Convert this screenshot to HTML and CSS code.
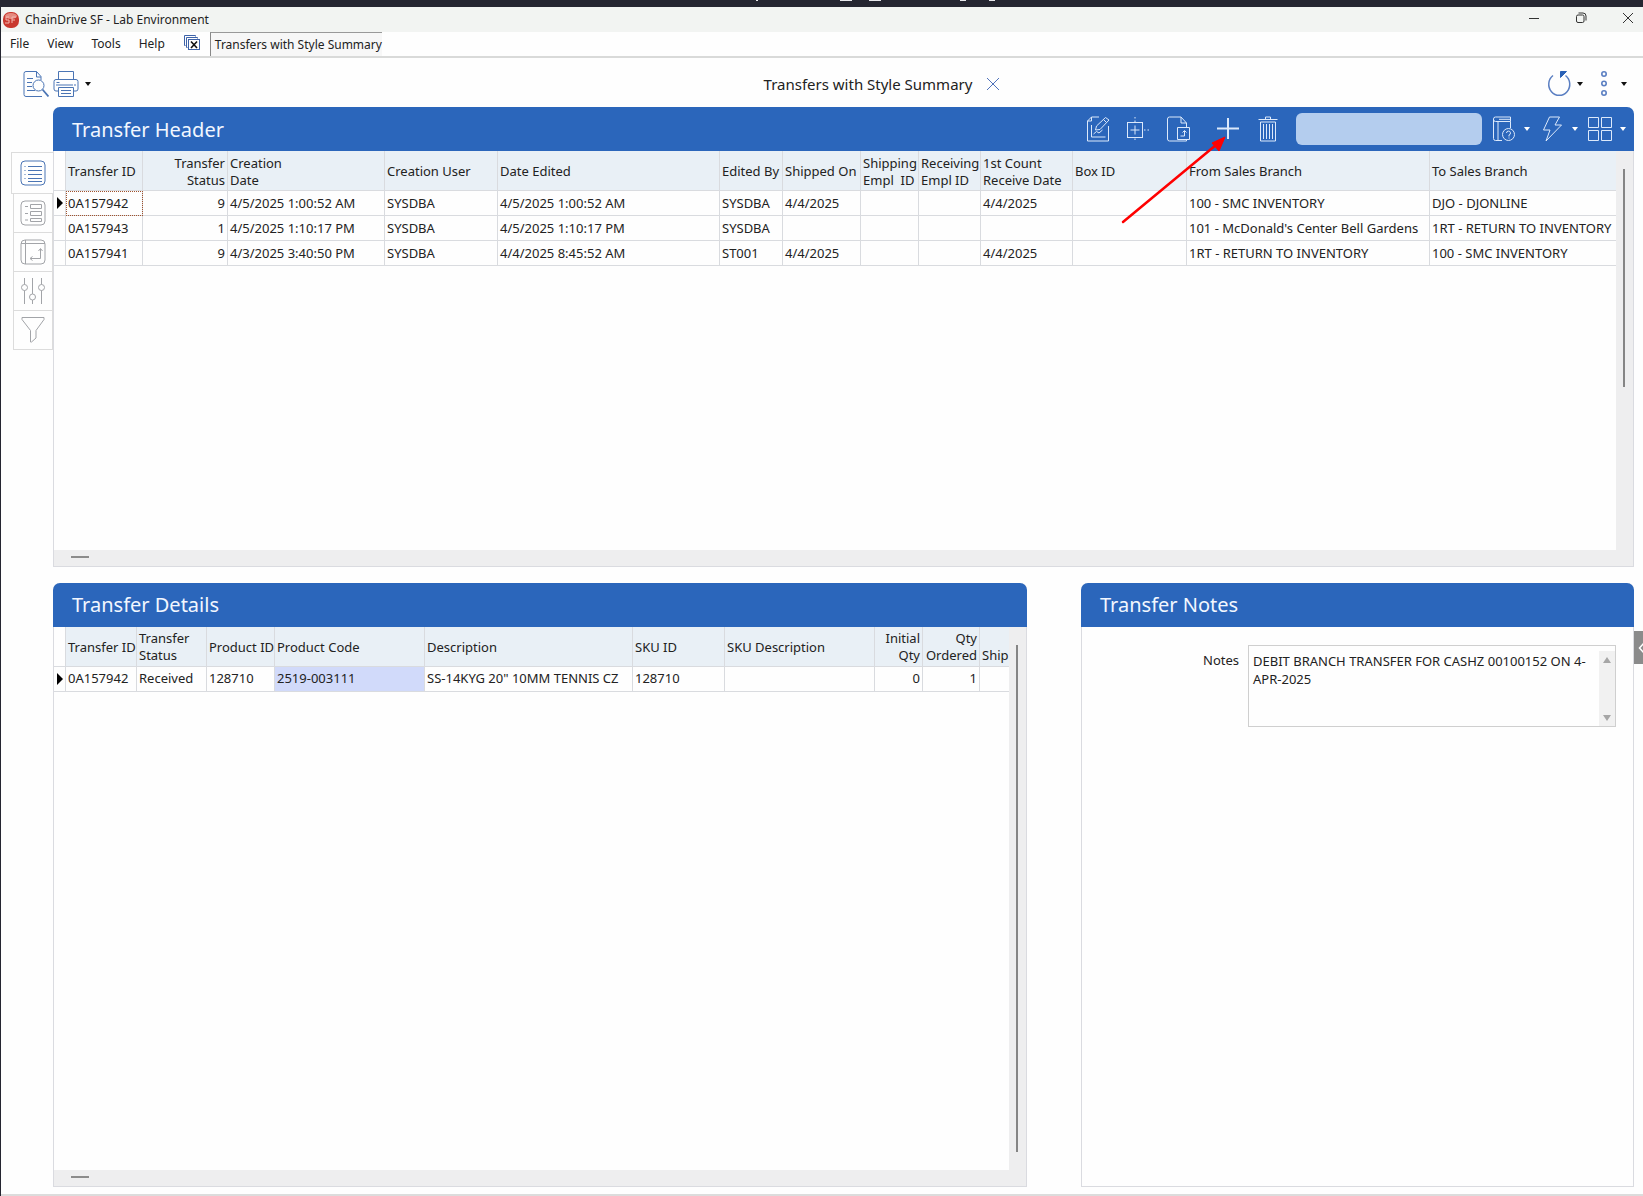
FILE: index.html
```html
<!DOCTYPE html>
<html lang="en">
<head>
    <meta charset="UTF-8">
    <meta name="viewport" content="width=device-width, initial-scale=1.0">
    <title>ChainDrive SF - Lab Environment</title>
    <link rel="stylesheet" href="styles.css">
</head>
<body>

    <!-- Strip of the window behind -->
    <div class="backdrop">
        <svg width="400" height="7" viewBox="0 0 400 7" fill="#e8e8ec">
            <rect x="134" y="0" width="2" height="1"/>
            <rect x="218" y="0" width="12" height="1"/>
            <rect x="247" y="0" width="12" height="1"/>
            <rect x="338" y="0" width="6" height="1"/>
            <rect x="367" y="0" width="6" height="1"/>
        </svg>
    </div>

    <div class="window">

        <!-- Title Bar -->
        <header class="title-bar">
            <svg class="app-logo" width="18" height="18" viewBox="0 0 18 18">
                <rect x="1" y="1" width="16" height="16" rx="7" fill="#c9382f"/>
                <ellipse cx="9" cy="5" rx="6" ry="3" fill="#e58a80"/>
                <path d="M7 6H4v3h3v3H3M14 6h-4v6M10 9h3" fill="none" stroke="#f3b7b0"/>
            </svg>
            <span class="app-name">ChainDrive SF - Lab Environment</span>
            <div class="window-buttons">
                <button aria-label="Minimize"><svg width="12" height="12" viewBox="0 0 12 12"><path d="M1 6.5h10"/></svg></button>
                <button aria-label="Restore"><svg width="12" height="12" viewBox="0 0 12 12"><rect x="1.5" y="3" width="7.5" height="7.5" rx="1.5"/><path d="M3.5 1h4.500a3 3 0 0 1 3 3v4.500"/></svg></button>
                <button aria-label="Close"><svg width="12" height="12" viewBox="0 0 12 12"><path d="M1 1l10 10M11 1L1 11"/></svg></button>
            </div>
        </header>

        <!-- Menu Bar -->
        <nav class="menu-bar">
            <button>File</button>
            <button>View</button>
            <button>Tools</button>
            <button>Help</button>
            <button class="close-all" aria-label="Close all">
                <svg width="18" height="18" viewBox="0 0 18 18" fill="none" stroke="#3d62a8">
                    <path d="M2.500 11.500h-1v-10h11v1"/>
                    <path d="M4.500 13.500h-1v-10h11v1"/>
                    <rect x="5.500" y="5.500" width="11" height="10" fill="#fff"/>
                    <path d="M8 7.500l6 6.500M14 7.500L8 14" stroke="#111" stroke-width="1.600"/>
                </svg>
            </button>
            <button class="window-tab">Transfers with Style Summary</button>
        </nav>

        <!-- Toolbar -->
        <div class="toolbar">
            <div class="tool-group">
                <button class="tool" aria-label="Preview">
                    <svg width="26" height="26" viewBox="0 0 26 26" fill="none" stroke="#4a74b4">
                        <path d="M19 25.500H3a2 2 0 0 1-2-2v-21a2 2 0 0 1 2-2h10.500l4.500 5V9M13.500.5V6H18M4 7.500h6M4 11.500h5M4 15.500h5M4 19.500h8"/>
                        <circle cx="15.500" cy="14.500" r="5.500"/>
                        <path d="M19.500 18.500l6 7" stroke-width="1.800"/>
                    </svg>
                </button>
                <button class="tool drop" aria-label="Print">
                    <svg width="26" height="26" viewBox="0 0 26 26" fill="none" stroke="#4a74b4">
                        <path d="M5.500 8V.5h15V8M5.500 20H3a2 2 0 0 1-2-2v-7.500a2 2 0 0 1 2-2h20a2 2 0 0 1 2 2V18a2 2 0 0 1-2 2h-2.500M3 14h17M5.500 16.500h15v9h-15zM8 19.500h10M8 22.500h10"/>
                        <path d="M3.500 11.500h3M21 14h2"/>
                    </svg>
                    <span class="caret"></span>
                </button>
            </div>
            <div class="page-title">
                <span>Transfers with Style Summary</span>
                <button class="tool" aria-label="Close tab">
                    <svg width="14" height="14" viewBox="0 0 14 14" fill="none" stroke="#4f72bb"><path d="M1 1l12 12M13 1L1 13"/></svg>
                </button>
            </div>
            <div class="tool-group right">
                <button class="tool drop" aria-label="Refresh">
                    <svg width="24" height="26" viewBox="0 0 24 26" fill="none" stroke="#5b7fc2" stroke-width="1.500">
                        <path d="M6 4.500A10.500 11 0 1 0 18.500 4.500"/>
                        <path d="M13.500.5h6l-6 6z" fill="#2b62b6" stroke="#2b62b6" stroke-width="1"/>
                    </svg>
                    <span class="caret"></span>
                </button>
                <button class="tool drop" aria-label="More">
                    <svg width="24" height="26" viewBox="0 0 24 26" fill="none" stroke="#5b7fc2" stroke-width="1.600">
                        <circle cx="13" cy="3" r="2.200"/><circle cx="13" cy="12.500" r="2.200"/><circle cx="13" cy="22" r="2.200"/>
                    </svg>
                    <span class="caret"></span>
                </button>
            </div>
        </div>

        <div class="workspace">

            <!-- View Tabs -->
            <aside class="view-tabs">
                <button class="view-tab active" aria-label="List view">
                    <svg width="26" height="26" viewBox="0 0 26 26"><rect x="1" y="1" width="24" height="24" rx="4"/><path d="M8 6.500h14M8 10.500h14M8 14.500h14M8 18.500h14M8 21.500h14M4.500 6.500h1M4.500 10.500h1M4.500 14.500h1M4.500 18.500h1"/></svg>
                </button>
                <button class="view-tab" aria-label="Form view">
                    <svg width="26" height="26" viewBox="0 0 26 26"><rect x="1" y="1" width="24" height="24" rx="4"/><path d="M10.500 4.500h11v4h-11zM10.500 11.500h11v4h-11zM10.500 18.500h11v3h-11zM5 6.500h3M5 13.500h3M5 20h3"/></svg>
                </button>
                <button class="view-tab" aria-label="Pivot view">
                    <svg width="26" height="26" viewBox="0 0 26 26"><rect x="1" y="1" width="24" height="24" rx="4"/><path d="M1 4.500h24M5.500 1v24M20.500 10v9.500h-10M18.500 12l2-2.500 2 2.500M12.500 17.500l-2.500 2 2.500 2"/></svg>
                </button>
                <button class="view-tab" aria-label="Settings">
                    <svg width="26" height="26" viewBox="0 0 26 26"><path d="M4.500 0v6.500M4.500 12.500V26M12.500 0v16M12.500 22v4M21.500 0v6.500M21.500 12.500V26"/><circle cx="4.500" cy="9.500" r="3"/><circle cx="12.500" cy="19" r="3"/><circle cx="21.500" cy="9.500" r="3"/></svg>
                </button>
                <button class="view-tab" aria-label="Filter">
                    <svg width="26" height="26" viewBox="0 0 26 26"><path d="M2 .5h22v2l-8 11V21l-4.500 4H10.500V13.500L2 2.500z"/></svg>
                </button>
            </aside>

            <main class="panels">

                <!-- Transfer Header -->
                <section class="panel header-panel">
                    <div class="panel-head">
                        <h2>Transfer Header</h2>
                        <div class="panel-tools">
                            <button class="tool" aria-label="Edit">
                                <svg width="24" height="26" viewBox="0 0 24 26"><path d="M13 1H5.500L1.500 5v20h21V10M5.500 1v4h-4M5.500 9v12h14M7.500 18l3-2.500 2.500 1.500 3.500-3M9.500 14l1-4L19.500 1.500l3.500 2.500-9 9.500zM17.500 3.500l3 3"/></svg>
                            </button>
                            <button class="tool" aria-label="Expand">
                                <svg width="24" height="26" viewBox="0 0 24 26"><rect x="1.500" y="6.500" width="15" height="15"/><path d="M9 9.500v9M4.500 14h9"/><path d="M9 1v5M9 22.500v3M18 14h5" stroke-dasharray="1.500 2"/></svg>
                            </button>
                            <button class="tool" aria-label="Export record">
                                <svg width="24" height="26" viewBox="0 0 24 26"><path d="M20.500 23.500v1.500h-17a2 2 0 0 1-2-2V3a2 2 0 0 1 2-2H15l5.500 6v4.500M15 1v6h5.500M11.500 11.500h12v12h-12zM14.500 20h4v-5M16.500 16.500l2-2 2 2"/></svg>
                            </button>
                            <button class="tool add" aria-label="Add">
                                <svg width="24" height="26" viewBox="0 0 24 26"><path d="M12 2v21M1 12.500h22" stroke-width="2"/></svg>
                                <svg class="pointer" width="108" height="98" viewBox="0 0 108 98"><path d="M3 92L96 15" stroke="#f00" stroke-width="2.500" stroke-linecap="round"/><path d="M105 7L99 21 92 13z" fill="#f00" stroke="#f00"/></svg>
                            </button>
                            <button class="tool" aria-label="Delete">
                                <svg width="24" height="26" viewBox="0 0 24 26"><path d="M2.500 3.500h19M9.500 3.500V1h5v2.500M4.500 6h15v19h-15zM7.500 8v15M10.500 8v15M13.500 8v15M16.500 8v15"/></svg>
                            </button>
                            <input class="search" type="text" aria-label="Search">
                            <button class="tool drop" aria-label="Help">
                                <svg width="24" height="26" viewBox="0 0 24 26"><path d="M10 24.500H3.500a2 2 0 0 1-2-2V3a2 2 0 0 1 2-2h15v4.500h-15a2 2 0 0 1-2-2M6 5.500v19M18.500 5.500V12M7 3.300h11"/><circle cx="16.500" cy="18.500" r="6"/><path d="M14.500 17a2 2 0 1 1 2.500 2v1.500M17 21.500v1"/></svg>
                                <span class="caret"></span>
                            </button>
                            <button class="tool drop" aria-label="Actions">
                                <svg width="24" height="26" viewBox="0 0 24 26"><path d="M9.500 1h10l-4.500 8h6.500L6 25l4-11H3.500z"/></svg>
                                <span class="caret"></span>
                            </button>
                            <button class="tool drop" aria-label="Layout">
                                <svg width="24" height="26" viewBox="0 0 24 26"><path d="M.5 1.500h10v10H.5zM13.500 1.500h10v10h-10zM.5 14.500h10v10H.5zM13.500 14.500h10v10h-10z"/></svg>
                                <span class="caret"></span>
                            </button>
                        </div>
                    </div>
                    <div class="grid-view">
                        <div class="grid-scroll">
                            <table>
                                <colgroup>
                                    <col class="w12"><col class="w77"><col class="w85"><col class="w157"><col class="w113"><col class="w222"><col class="w63"><col class="w78"><col class="w58"><col class="w62"><col class="w92"><col class="w114"><col class="w243"><col>
                                </colgroup>
                                <thead>
                                    <tr>
                                        <th class="mark"></th>
                                        <th>Transfer ID</th>
                                        <th class="num">Transfer<br>Status</th>
                                        <th>Creation<br>Date</th>
                                        <th>Creation User</th>
                                        <th>Date Edited</th>
                                        <th>Edited By</th>
                                        <th>Shipped On</th>
                                        <th>Shipping<br>Empl&nbsp; ID</th>
                                        <th>Receiving<br>Empl ID</th>
                                        <th>1st Count<br>Receive Date</th>
                                        <th>Box ID</th>
                                        <th>From Sales Branch</th>
                                        <th>To Sales Branch</th>
                                    </tr>
                                </thead>
                                <tbody>
                                    <tr>
                                        <td class="mark current"></td>
                                        <td class="focused">0A157942</td>
                                        <td class="num">9</td>
                                        <td>4/5/2025 1:00:52 AM</td>
                                        <td>SYSDBA</td>
                                        <td>4/5/2025 1:00:52 AM</td>
                                        <td>SYSDBA</td>
                                        <td>4/4/2025</td>
                                        <td></td>
                                        <td></td>
                                        <td>4/4/2025</td>
                                        <td></td>
                                        <td>100 - SMC INVENTORY</td>
                                        <td>DJO - DJONLINE</td>
                                    </tr>
                                    <tr>
                                        <td class="mark"></td>
                                        <td>0A157943</td>
                                        <td class="num">1</td>
                                        <td>4/5/2025 1:10:17 PM</td>
                                        <td>SYSDBA</td>
                                        <td>4/5/2025 1:10:17 PM</td>
                                        <td>SYSDBA</td>
                                        <td></td>
                                        <td></td>
                                        <td></td>
                                        <td></td>
                                        <td></td>
                                        <td>101 - McDonald's Center Bell Gardens</td>
                                        <td>1RT - RETURN TO INVENTORY</td>
                                    </tr>
                                    <tr>
                                        <td class="mark"></td>
                                        <td>0A157941</td>
                                        <td class="num">9</td>
                                        <td>4/3/2025 3:40:50 PM</td>
                                        <td>SYSDBA</td>
                                        <td>4/4/2025 8:45:52 AM</td>
                                        <td>ST001</td>
                                        <td>4/4/2025</td>
                                        <td></td>
                                        <td></td>
                                        <td>4/4/2025</td>
                                        <td></td>
                                        <td>1RT - RETURN TO INVENTORY</td>
                                        <td>100 - SMC INVENTORY</td>
                                    </tr>
                                </tbody>
                            </table>
                        </div>
                        <div class="v-scroll"><div class="thumb"></div></div>
                        <div class="h-scroll"><div class="thumb"></div></div>
                    </div>
                </section>

                <div class="bottom-row">

                    <!-- Transfer Details -->
                    <section class="panel">
                        <div class="panel-head">
                            <h2>Transfer Details</h2>
                        </div>
                        <div class="grid-view">
                            <div class="grid-scroll">
                                <table>
                                    <colgroup>
                                        <col class="w12"><col class="w71"><col class="w70"><col class="w68"><col class="w150"><col class="w208"><col class="w92"><col class="w150"><col class="w48"><col class="w57"><col>
                                    </colgroup>
                                    <thead>
                                        <tr>
                                            <th class="mark"></th>
                                            <th>Transfer ID</th>
                                            <th>Transfer<br>Status</th>
                                            <th>Product ID</th>
                                            <th>Product Code</th>
                                            <th>Description</th>
                                            <th>SKU ID</th>
                                            <th>SKU Description</th>
                                            <th class="num">Initial<br>Qty</th>
                                            <th class="num">Qty<br>Ordered</th>
                                            <th>&nbsp;<br>Ship</th>
                                        </tr>
                                    </thead>
                                    <tbody>
                                        <tr>
                                            <td class="mark current"></td>
                                            <td>0A157942</td>
                                            <td>Received</td>
                                            <td>128710</td>
                                            <td class="selected">2519-003111</td>
                                            <td>SS-14KYG 20" 10MM TENNIS CZ</td>
                                            <td>128710</td>
                                            <td></td>
                                            <td class="num">0</td>
                                            <td class="num">1</td>
                                            <td></td>
                                        </tr>
                                    </tbody>
                                </table>
                            </div>
                            <div class="v-scroll tall"><div class="thumb"></div></div>
                            <div class="h-scroll"><div class="thumb"></div></div>
                        </div>
                    </section>

                    <!-- Transfer Notes -->
                    <section class="panel">
                        <div class="panel-head">
                            <h2>Transfer Notes</h2>
                        </div>
                        <div class="notes-form">
                            <label for="notes">Notes</label>
                            <div class="notes-box">
                                <textarea id="notes" spellcheck="false">DEBIT BRANCH TRANSFER FOR CASHZ 00100152 ON 4-APR-2025</textarea>
                                <div class="notes-scroll">
                                    <span class="arrow-up"></span>
                                    <span class="arrow-down"></span>
                                </div>
                            </div>
                        </div>
                    </section>
                </div>
            </main>
        </div>

        <button class="side-handle" aria-label="Open side panel">
            <svg width="9" height="14" viewBox="0 0 9 14" fill="none" stroke="#fff" stroke-width="1.500"><path d="M10 2L5.500 7l4.500 5"/></svg>
        </button>
    </div>

</body>
</html>
```
FILE: styles.css
```css
/* General Styles */
* {
    box-sizing: border-box;
}

body {
    margin: 0;
    height: 100vh;
    display: flex;
    flex-direction: column;
    background-color: #252631;
    font-family: "Noto Sans", "Open Sans", sans-serif;
    font-size: 12px;
    color: #222;
    overflow: hidden;
}

button {
    font: inherit;
    color: inherit;
    background: none;
    border: none;
    padding: 0;
    display: flex;
    align-items: center;
}

svg {
    display: block;
    flex: none;
}

.backdrop {
    height: 7px;
    flex: none;
    display: flex;
    justify-content: center;
}

.window {
    flex: 1;
    min-height: 0;
    margin-left: 1px;
    display: flex;
    flex-direction: column;
    background-color: #fefefe;
    border-bottom: 2px solid #dcdcdc;
    position: relative;
}

/* Title Bar */
.title-bar {
    height: 25px;
    flex: none;
    display: flex;
    align-items: center;
    padding: 0 9px 0 1px;
    background-color: #f2f4f2;
}

.app-name {
    margin-left: 5px;
}

.window-buttons {
    margin-left: auto;
    display: flex;
    gap: 35px;
    padding-bottom: 4px;
}

.window-buttons svg {
    fill: none;
    stroke: #333;
}

/* Menu Bar */
.menu-bar {
    height: 26px;
    flex: none;
    display: flex;
    align-items: stretch;
    padding-left: 9px;
    gap: 18px;
    border-bottom: 2px solid #d9dad9;
}

.menu-bar button {
    padding-bottom: 2px;
}

.menu-bar .window-tab {
    margin-left: -9px;
    padding: 0 0 0 4px;
    background-color: #f7f7f7;
    border-top: 1px solid #999;
    border-left: 1px solid #888;
}

/* Toolbar */
.toolbar {
    height: 49px;
    flex: none;
    display: grid;
    grid-template-columns: 1fr auto 1fr;
    align-items: center;
    padding: 3px 16px 0 22px;
}

.tool-group {
    display: flex;
    gap: 4px;
}

.tool-group.right {
    gap: 8px;
    justify-content: flex-end;
}

.drop {
    gap: 8px;
}

.tool-group .drop {
    gap: 6px;
}

.caret {
    border-left: 3px solid transparent;
    border-right: 3px solid transparent;
    border-top: 4px solid #111;
}

.page-title {
    display: flex;
    align-items: center;
    gap: 14px;
    padding-left: 114px;
    font-size: 15px;
}

/* Workspace */
.workspace {
    flex: 1;
    min-height: 0;
    display: flex;
    padding: 0 9px 7px 10px;
}

.view-tabs {
    width: 42px;
    flex: none;
    padding-top: 45px;
    display: flex;
    flex-direction: column;
    align-items: flex-end;
}

.view-tab {
    width: 40px;
    height: 39px;
    justify-content: center;
    border: 1px solid #dcdcdc;
    border-top: none;
}

.view-tab.active {
    width: 42px;
    height: 42px;
    border-top: 1px solid #dcdcdc;
    border-right: none;
}

.view-tab svg {
    fill: none;
    stroke: #a2a4a8;
}

.view-tab.active svg {
    stroke: #4a74b4;
}

.panels {
    flex: 1;
    min-width: 0;
    display: flex;
    flex-direction: column;
    gap: 16px;
}

/* Panels */
.panel {
    flex: 1;
    min-width: 0;
    min-height: 0;
    display: flex;
    flex-direction: column;
    border: 1px solid #dadbe0;
    border-top: none;
    border-radius: 7px 7px 0 0;
}

.header-panel {
    flex: 459 1 0;
}

.bottom-row {
    flex: 605 1 0;
    min-height: 0;
    display: grid;
    grid-template-columns: 974fr 553fr;
    gap: 54px;
}

.panel-head {
    height: 44px;
    flex: none;
    margin: 0 -1px;
    padding: 0 8px 0 19px;
    display: flex;
    align-items: center;
    background-color: #2b66bb;
    color: #f2f7ff;
    border-radius: 7px 7px 0 0;
}

.panel-head h2 {
    margin: 0;
    font-size: 20px;
    font-weight: normal;
}

.panel-tools {
    margin-left: auto;
    display: flex;
    align-items: center;
}

.panel-tools .tool {
    margin-right: 16px;
    position: relative;
}

.panel-tools .tool:nth-child(3) {
    margin-right: 26px;
}

.panel-tools .drop {
    margin: 0 0 0 10px;
}

.panel-tools svg {
    fill: none;
    stroke: #dce9fb;
}

.panel-tools .caret {
    border-top-color: #fff;
}

/* Red arrow that points at the Add button */
.pointer {
    position: absolute;
    top: 14px;
    right: 12px;
    z-index: 2;
}

.search {
    width: 186px;
    height: 32px;
    border: none;
    border-radius: 6px;
    background-color: #b4cdee;
}

/* Data Grid */
.grid-view {
    flex: 1;
    min-height: 0;
    display: grid;
    grid-template-columns: minmax(0, 1fr) 17px;
    grid-template-rows: minmax(0, 1fr) 16px;
    background-color: #eeeeef;
}

.grid-scroll {
    overflow: hidden;
    background-color: #fefefe;
}

table {
    width: 100%;
    table-layout: fixed;
    border-collapse: separate;
    border-spacing: 0;
    font-size: 13px;
}

th,
td {
    padding: 0 2px;
    text-align: left;
    font-weight: normal;
    white-space: nowrap;
    overflow: hidden;
    border-right: 1px solid #d9dbdf;
    border-bottom: 1px solid #d9dbdf;
}

th {
    height: 40px;
    padding-top: 2px;
    line-height: 17px;
    background-color: #e9f0f6;
}

td {
    height: 25px;
    line-height: 17px;
}

th:last-child,
td:last-child {
    border-right: none;
}

.num {
    text-align: right;
}

.mark {
    background-color: #fefefe;
}

.current::before {
    content: "";
    display: block;
    width: 0;
    margin-left: 1px;
    border-top: 6px solid transparent;
    border-bottom: 6px solid transparent;
    border-left: 6px solid #000;
}

.focused {
    outline: 1px dotted #a0522d;
    outline-offset: -1px;
}

.selected {
    background-color: #d1dafa;
}

.w12 { width: 12px; }
.w48 { width: 48px; }
.w57 { width: 57px; }
.w58 { width: 58px; }
.w62 { width: 62px; }
.w63 { width: 63px; }
.w68 { width: 68px; }
.w70 { width: 70px; }
.w71 { width: 71px; }
.w77 { width: 77px; }
.w78 { width: 78px; }
.w85 { width: 85px; }
.w92 { width: 92px; }
.w113 { width: 113px; }
.w114 { width: 114px; }
.w150 { width: 150px; }
.w157 { width: 157px; }
.w208 { width: 208px; }
.w222 { width: 222px; }
.w243 { width: 243px; }

/* Scrollbars */
.v-scroll {
    padding: 18px 0 18px 7px;
}

.v-scroll .thumb {
    width: 2px;
    height: 60%;
    background-color: #858585;
}

.v-scroll.tall .thumb {
    height: 100%;
}

.h-scroll {
    grid-column: 1 / 3;
    padding: 6px 17px;
}

.h-scroll .thumb {
    width: 18px;
    height: 2px;
    background-color: #8c8c8c;
}

/* Notes */
.notes-form {
    display: flex;
    align-items: flex-start;
    gap: 9px;
    padding: 18px 17px 0 0;
    font-size: 13px;
}

.notes-form label {
    width: 157px;
    flex: none;
    text-align: right;
    line-height: 30px;
}

.notes-box {
    flex: 1;
    height: 82px;
    display: flex;
    border: 1px solid #cfcfcf;
}

.notes-box textarea {
    flex: 1;
    min-width: 0;
    padding: 6px 4px;
    border: none;
    outline: none;
    resize: none;
    overflow: hidden;
    background: none;
    font: inherit;
    line-height: 18px;
    color: inherit;
}

.notes-scroll {
    width: 16px;
    margin-top: 5px;
    padding: 6px 4px 5px;
    display: flex;
    flex-direction: column;
    justify-content: space-between;
    background-color: #f1f1f1;
}

.arrow-up,
.arrow-down {
    border-left: 4px solid transparent;
    border-right: 4px solid transparent;
}

.arrow-up {
    border-bottom: 6px solid #a6a6a6;
}

.arrow-down {
    border-top: 6px solid #a6a6a6;
}

.side-handle {
    position: absolute;
    right: 0;
    top: 624px;
    width: 9px;
    height: 33px;
    background-color: #8b8b8b;
}
```
